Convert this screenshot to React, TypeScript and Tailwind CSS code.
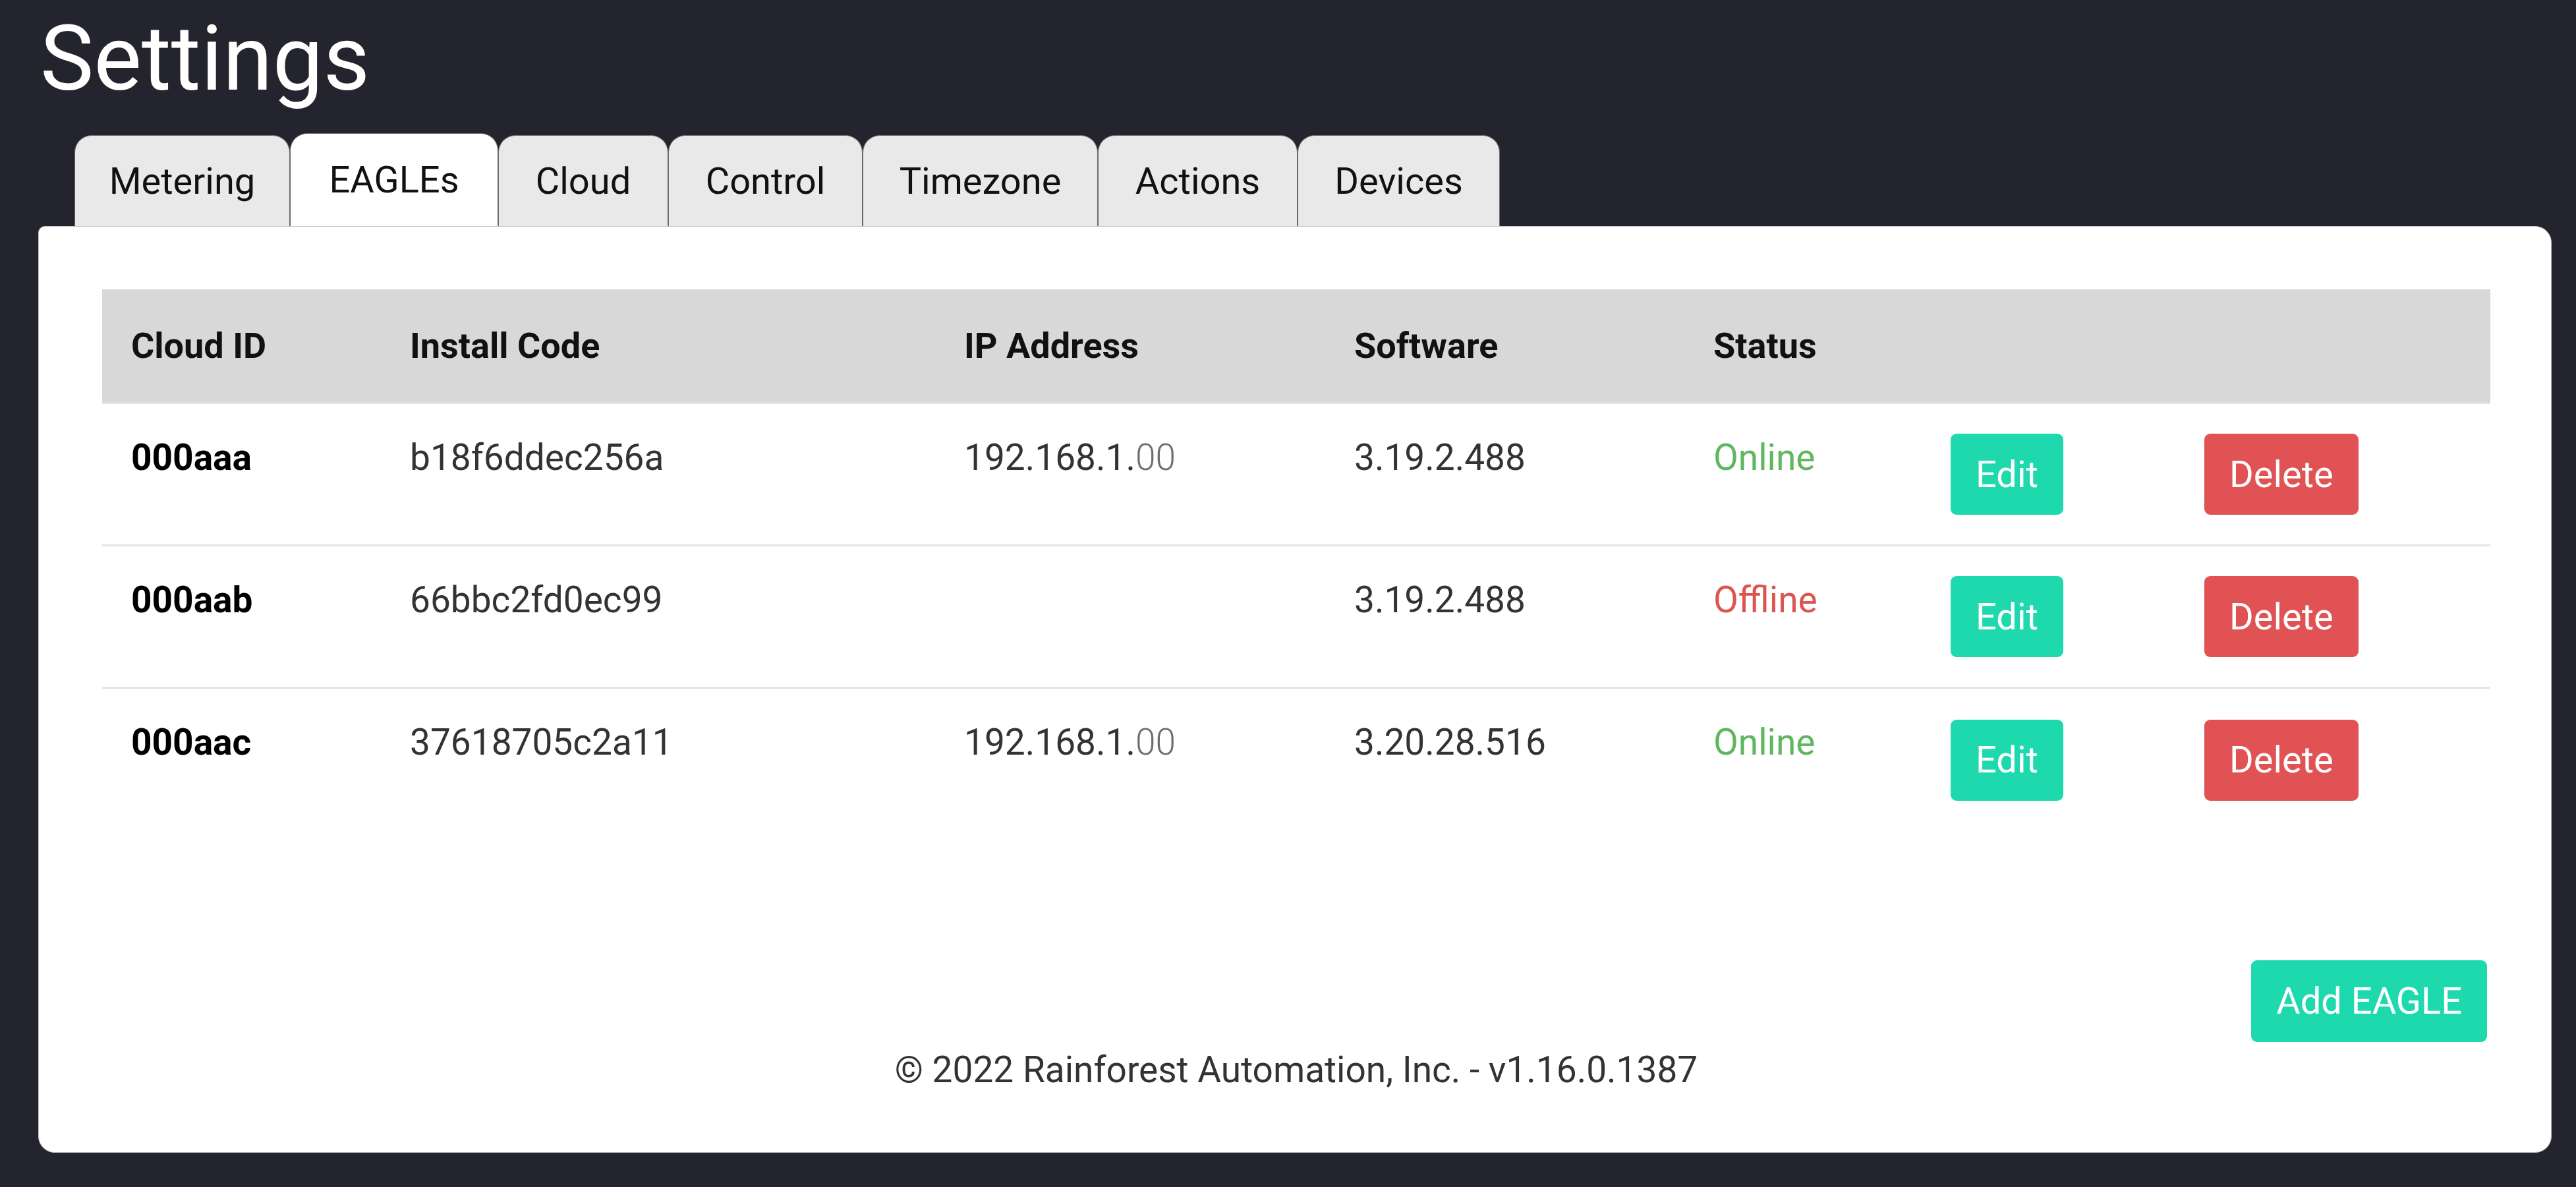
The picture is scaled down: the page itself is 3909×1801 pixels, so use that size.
import type { ReactNode } from 'react';

type Eagle = {
  cloudId: string;
  installCode: string;
  ip: string | null;
  software: string;
  online: boolean;
};

const TABS = [
  { label: 'Metering', w: 'w-[327px]' },
  { label: 'EAGLEs', w: 'w-[316px]' },
  { label: 'Cloud', w: 'w-[258px]' },
  { label: 'Control', w: 'w-[295px]' },
  { label: 'Timezone', w: 'w-[357px]' },
  { label: 'Actions', w: 'w-[303px]' },
  { label: 'Devices', w: 'w-[307px]' },
];

const EAGLES: Eagle[] = [
  { cloudId: '000aaa', installCode: 'b18f6ddec256a', ip: '192.168.1.', software: '3.19.2.488', online: true },
  { cloudId: '000aab', installCode: '66bbc2fd0ec99', ip: null, software: '3.19.2.488', online: false },
  { cloudId: '000aac', installCode: '37618705c2a11', ip: '192.168.1.', software: '3.20.28.516', online: true },
];

const COLS = 'grid grid-cols-[423px_841px_592px_545px_360px_385px_478px]';

function Tab({ label, w, active }: { label: string; w: string; active?: boolean }) {
  return (
    <div
      className={`flex flex-none items-center justify-center rounded-t-[26px] border-x-[1.5px] border-t-[1.5px] border-[#6b6b73] text-[56px] text-[#111] ${w} ${
        active ? 'h-[141px] bg-white' : 'h-[138px] bg-[#e9e9e9]'
      }`}
    >
      {label}
    </div>
  );
}

function Cell({ children, className = '' }: { children?: ReactNode; className?: string }) {
  return <div className={`pl-[44px] pt-[39px] leading-[84px] ${className}`}>{children}</div>;
}

function Btn({ children, tone }: { children: ReactNode; tone: 'ok' | 'danger' }) {
  return (
    <button
      className={`h-[123px] rounded-[9px] px-[38px] text-[56px] text-white ${
        tone === 'ok' ? 'bg-[#1dd9ad]' : 'bg-[#e05253]'
      }`}
    >
      {children}
    </button>
  );
}

export default function App() {
  return (
    <div className="min-h-screen bg-[#24242e] pl-[58px] pr-[37px] pt-[20px] font-['Roboto',sans-serif]">
      <h1 className="ml-[3px] text-[137px] leading-[138px] text-white">Settings</h1>

      <div className="ml-[55px] mt-[44px] flex items-end">
        {TABS.map((t) => (
          <Tab key={t.label} label={t.label} w={t.w} active={t.label === 'EAGLEs'} />
        ))}
      </div>

      <div className="rounded-[25px] rounded-tl-[10px] border border-[#c4c4c8] bg-white pb-[83px] pl-[96px] pr-[92px] pt-[95px]">
        <div className={`${COLS} h-[174px] items-center border-b-[3px] border-[#dfe2e6] bg-[#d8d8d8] text-[54px] font-bold text-[#111]`}>
          <div className="pl-[44px]">Cloud ID</div>
          <div className="pl-[44px]">Install Code</div>
          <div className="pl-[44px]">IP Address</div>
          <div className="pl-[44px]">Software</div>
          <div className="pl-[44px]">Status</div>
          <div />
          <div />
        </div>

        {EAGLES.map((e, i) => (
          <div
            key={e.cloudId}
            className={`${COLS} h-[216px] ${i < EAGLES.length - 1 ? 'border-b-[3px] border-[#e1e4e8]' : ''}`}
          >
            <Cell className="text-[55px] font-bold text-black">{e.cloudId}</Cell>
            <Cell className="text-[55px] text-[#333]">{e.installCode}</Cell>
            <Cell className="text-[55px] text-[#333]">
              {e.ip && (
                <>
                  {e.ip}
                  <span className="font-light text-[#6e6e6e]">00</span>
                </>
              )}
            </Cell>
            <Cell className="text-[55px] text-[#333]">{e.software}</Cell>
            <Cell className={`text-[55px] ${e.online ? 'text-[#5fb760]' : 'text-[#dc5550]'}`}>
              {e.online ? 'Online' : 'Offline'}
            </Cell>
            <div className="flex items-center pl-[44px]">
              <Btn tone="ok">Edit</Btn>
            </div>
            <div className="flex items-center pl-[44px]">
              <Btn tone="danger">Delete</Btn>
            </div>
          </div>
        ))}

        <div className="mt-[196px] flex justify-end">
          <button className="mr-[5px] h-[124px] rounded-[9px] bg-[#1dd9ad] px-[38px] text-[56px] text-white">
            Add EAGLE
          </button>
        </div>

        <p className="text-center text-[55px] leading-[84px] text-[#333]">
          © 2022 Rainforest Automation, Inc. - v1.16.0.1387
        </p>
      </div>
    </div>
  );
}
